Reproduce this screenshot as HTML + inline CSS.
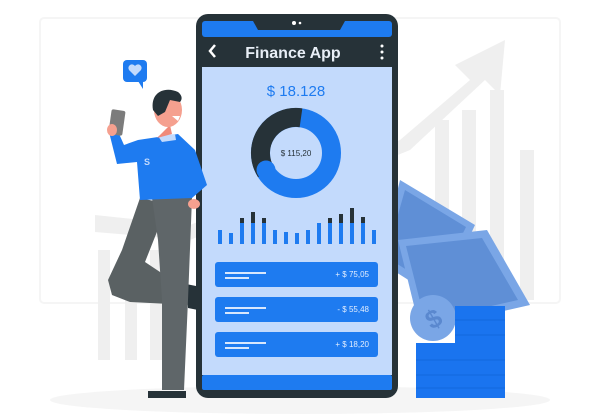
<!DOCTYPE html>
<html><head><meta charset="utf-8"><style>
html,body{margin:0;padding:0;background:#fff;width:597px;height:416px;overflow:hidden}
svg{display:block}
text{font-family:"Liberation Sans",sans-serif}
</style></head><body>
<svg width="597" height="416" viewBox="0 0 597 416" xmlns="http://www.w3.org/2000/svg">
<rect x="40" y="18" width="520" height="285" rx="4" fill="none" stroke="#f5f5f5" stroke-width="2"/>
<ellipse cx="300" cy="400" rx="250" ry="14" fill="#f5f5f5"/>
<g fill="#efefef">
<rect x="98" y="250" width="12" height="110"/>
<rect x="125" y="275" width="12" height="85"/>
<rect x="150" y="250" width="12" height="110"/>
<rect x="435" y="120" width="14" height="180"/>
<rect x="462" y="110" width="14" height="190"/>
<rect x="490" y="90" width="14" height="210"/>
<rect x="520" y="150" width="14" height="150"/>
<path d="M95 215 L190 225 L400 140 L470 80 L455 65 L505 40 L500 95 L485 80 L410 150 L190 240 L95 232Z"/>
</g>
<!-- bills -->
<path d="M400 180 L475 225 L440 300 L380 262Z" fill="#7aa6e6"/>
<path d="M405 190 L466 227 L436 288 L386 257Z" fill="#5f8fd6"/>
<path d="M398 240 L487 230 L530 305 L420 330Z" fill="#7aa6e6"/>
<path d="M406 246 L482 238 L518 300 L425 321Z" fill="#5f8fd6"/>
<circle cx="433" cy="318" r="23" fill="#7aa6e6"/>
<text x="433" y="328" font-size="26" font-weight="bold" fill="#5a88cf" text-anchor="middle" transform="rotate(-30 433 318)">$</text>
<!-- coins -->
<g fill="#1a74ef">
<rect x="455" y="306" width="50" height="92"/>
<rect x="416" y="343" width="50" height="55"/>
</g>
<g stroke="#0f5fd0" stroke-width="1" opacity="0.6">
<line x1="455" y1="320" x2="505" y2="320"/><line x1="455" y1="335" x2="505" y2="335"/>
<line x1="416" y1="360" x2="505" y2="360"/><line x1="416" y1="375" x2="505" y2="375"/><line x1="416" y1="388" x2="505" y2="388"/>
</g>
<!-- phone -->
<rect x="196" y="14" width="202" height="384" rx="12" fill="#263238"/>
<rect x="202" y="21" width="190" height="16" rx="3" fill="#1e7bf0"/>
<path d="M253 21 L258 30 L340 30 L345 21Z" fill="#263238"/>
<circle cx="294" cy="23" r="2" fill="#fff"/><circle cx="300" cy="23" r="1.3" fill="#fff"/>
<rect x="202" y="37" width="190" height="30" fill="#263238"/>
<text x="293" y="58" font-size="16" font-weight="bold" fill="#e8eef6" text-anchor="middle">Finance App</text>
<path d="M215 45 L210 51 L215 57" stroke="#fff" stroke-width="2.5" fill="none"/>
<g fill="#fff"><circle cx="382" cy="46" r="1.5"/><circle cx="382" cy="52" r="1.5"/><circle cx="382" cy="58" r="1.5"/></g>
<rect x="202" y="67" width="190" height="308" fill="#c3dafc"/>
<rect x="202" y="375" width="190" height="15" rx="2" fill="#1e7bf0"/>
<text x="296" y="96" font-size="15" fill="#1e7bf0" text-anchor="middle">$ 18.128</text>
<circle cx="296" cy="153" r="35.5" fill="none" stroke="#1e7bf0" stroke-width="19"/>
<path d="M301 117.8 A35.5 35.5 0 0 0 266 172" fill="none" stroke="#263238" stroke-width="19"/>
<circle cx="266" cy="170" r="9.5" fill="#1e7bf0"/>
<text x="296" y="156" font-size="8" fill="#263238" text-anchor="middle">$ 115,20</text>
<g fill="#1e7bf0">
<rect x="218" y="230" width="4" height="14"/><rect x="229" y="233" width="4" height="11"/>
<rect x="240" y="218" width="4" height="26"/><rect x="251" y="212" width="4" height="32"/>
<rect x="262" y="218" width="4" height="26"/><rect x="273" y="230" width="4" height="14"/>
<rect x="284" y="232" width="4" height="12"/><rect x="295" y="233" width="4" height="11"/>
<rect x="306" y="230" width="4" height="14"/><rect x="317" y="223" width="4" height="21"/>
<rect x="328" y="218" width="4" height="26"/><rect x="339" y="214" width="4" height="30"/>
<rect x="350" y="208" width="4" height="36"/><rect x="361" y="217" width="4" height="27"/>
<rect x="372" y="230" width="4" height="14"/>
</g>
<g fill="#263238">
<rect x="240" y="218" width="4" height="5"/><rect x="251" y="212" width="4" height="11"/>
<rect x="262" y="218" width="4" height="5"/><rect x="328" y="218" width="4" height="5"/>
<rect x="339" y="214" width="4" height="9"/><rect x="350" y="208" width="4" height="15"/>
<rect x="361" y="217" width="4" height="6"/>
</g>
<rect x="215" y="262" width="163" height="25" rx="3" fill="#1e7bf0"/>
<rect x="215" y="297" width="163" height="25" rx="3" fill="#1e7bf0"/>
<rect x="215" y="332" width="163" height="25" rx="3" fill="#1e7bf0"/>
<g fill="#d8e7fd">
<rect x="225" y="272" width="41" height="2"/><rect x="225" y="277" width="24" height="2"/>
<rect x="225" y="307" width="41" height="2"/><rect x="225" y="312" width="24" height="2"/>
<rect x="225" y="342" width="41" height="2"/><rect x="225" y="347" width="24" height="2"/>
</g>
<g font-size="8" fill="#e3eefe" text-anchor="end">
<text x="369" y="277">+ $ 75,05</text>
<text x="369" y="312">- $ 55,48</text>
<text x="369" y="347">+ $ 18,20</text>
</g>
<!-- man -->
<rect x="123" y="60" width="24" height="22" rx="4" fill="#1e7bf0"/>
<path d="M138 81 L143 89 L143 81Z" fill="#1e7bf0"/>
<path d="M135 76 L129 70 A3 3 0 0 1 135 66 A3 3 0 0 1 141 70Z" fill="#c3dafc"/>
<!-- bent leg -->
<path d="M140 198 L168 204 L145 262 L175 282 L190 290 L190 305 L130 302 L112 295 L108 280 L122 250 Z" fill="#5a6163"/>
<path d="M186 284 L196 286 L198 310 L188 308Z" fill="#263238"/>
<!-- standing leg -->
<path d="M152 198 L192 198 L188 300 L184 390 L162 390 L162 300 L158 240 Z" fill="#5f6669"/>
<path d="M148 391 L186 391 L186 398 L148 398Z" fill="#263238"/>
<!-- torso -->
<path d="M138 140 L178 134 L195 150 L207 185 L192 198 L140 200 L137 162 L117 164 L108 128 L116 127 L124 145Z" fill="#1e7bf0"/>
<path d="M158 136 L175 134 L176 140 L162 142Z" fill="#c3dafc"/>
<text x="144" y="165" font-size="9" font-weight="bold" fill="#c3dafc">S</text>
<path d="M157 138 L172 134 L170 125 Z" fill="#f08a7a"/>
<ellipse cx="168" cy="110" rx="14" ry="17" fill="#f5a08f"/>
<path d="M153 110 C150 92 165 86 178 92 C183 96 182 100 180 102 L170 100 L165 112 L158 116Z" fill="#263238"/>
<path d="M172 116 L180 116 L178 121Z" fill="#fff"/>
<rect x="110" y="110" width="14" height="25" rx="2" fill="#7c7c7c" transform="rotate(8 117 122)"/>
<ellipse cx="112" cy="130" rx="5" ry="6" fill="#f5a08f"/>
<ellipse cx="194" cy="204" rx="6" ry="5" fill="#f5a08f"/>
</svg>
</body></html>
